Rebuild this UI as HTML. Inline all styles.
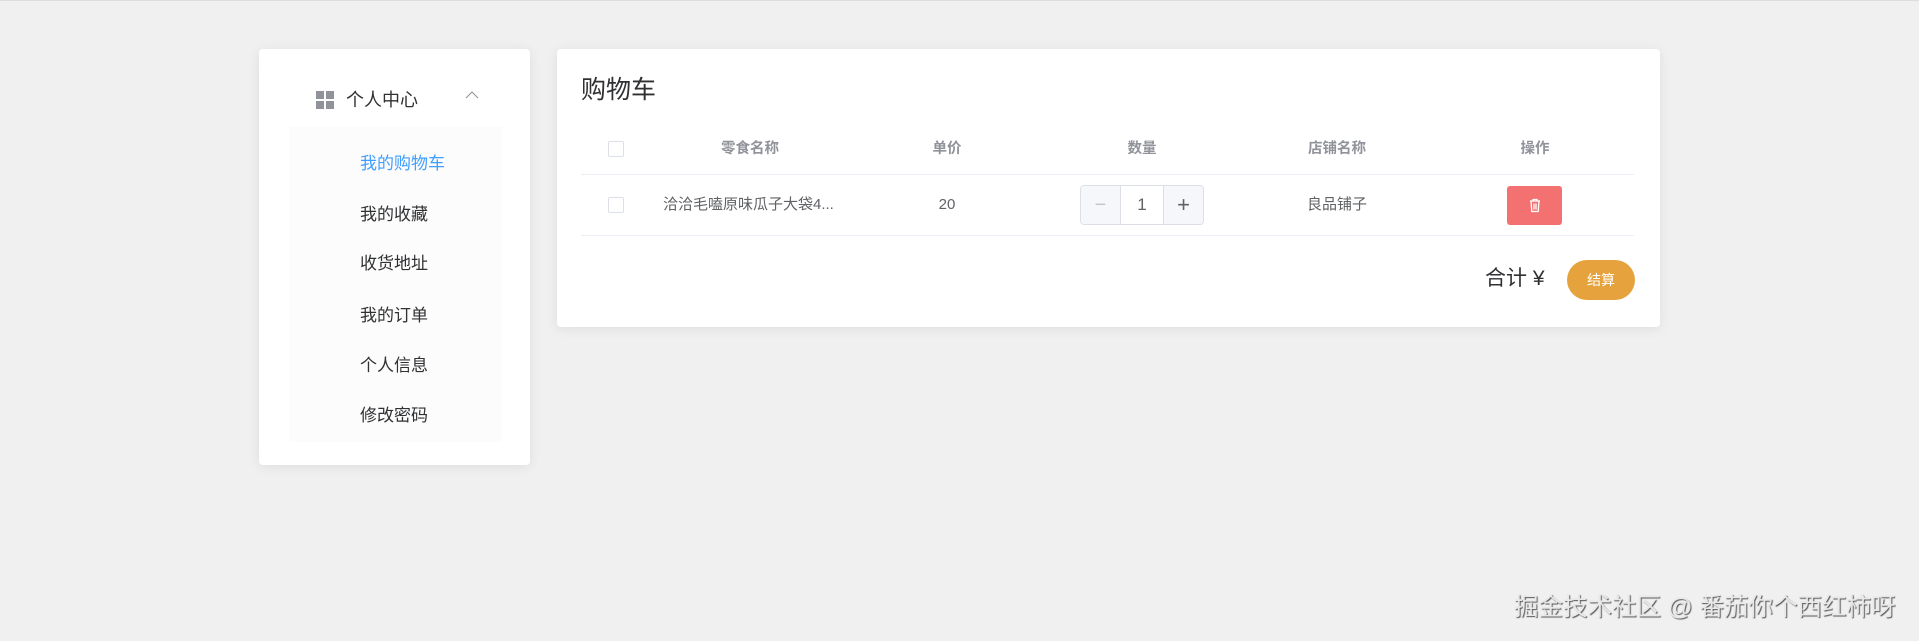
<!DOCTYPE html>
<html><head><meta charset="utf-8"><style>
*{margin:0;padding:0;box-sizing:border-box}
body{width:1919px;height:641px;background:#f0f0f0;font-family:"Liberation Sans","Noto Sans CJK SC",sans-serif;position:relative;overflow:hidden;border-top:1px solid #ddd}
.card{position:absolute;background:#fff;border-radius:4px;box-shadow:0 2px 12px rgba(0,0,0,.08)}
.abs{position:absolute}
.menu{position:absolute;left:289px;top:126px;width:213px;height:315px;background:#fcfcfc}
.mi{position:absolute;left:360px;font-size:17px;color:#303133;line-height:20px}
.cb{position:absolute;width:16px;height:16px;border:1px solid #dcdfe6;border-radius:2px;background:#fff}
.th{position:absolute;top:139px;font-size:14.5px;font-weight:bold;color:#909399;transform:translateX(-50%);line-height:18px}
.line{position:absolute;left:581px;width:1053px;height:1px;background:#ebeef5}
</style></head><body>
<div class="card" style="left:259px;top:48px;width:271px;height:416px"></div>
<div class="card" style="left:557px;top:48px;width:1103px;height:278px"></div>
<svg class="abs" style="left:316px;top:90px" width="18" height="18"><rect x="0" y="0" width="8" height="8" fill="#909399"/><rect x="10" y="0" width="8" height="8" fill="#909399"/><rect x="0" y="10" width="8" height="8" fill="#909399"/><rect x="10" y="10" width="8" height="8" fill="#909399"/></svg>
<div class="abs" style="left:346px;top:88px;font-size:18px;color:#303133;line-height:22px">个人中心</div>
<svg class="abs" style="left:465px;top:90px" width="14" height="9"><path d="M1 7L7 1L13 7" stroke="#909399" fill="none" stroke-width="1"/></svg>
<div class="menu"></div>
<div class="mi" style="top:153px;color:#409eff">我的购物车</div>
<div class="mi" style="top:204px">我的收藏</div>
<div class="mi" style="top:253px">收货地址</div>
<div class="mi" style="top:305px">我的订单</div>
<div class="mi" style="top:355px">个人信息</div>
<div class="mi" style="top:405px">修改密码</div>

<div class="abs" style="left:581px;top:74px;font-size:25px;color:#303133;line-height:30px">购物车</div>
<div class="cb" style="left:608px;top:140px"></div>
<div class="th" style="left:750px">零食名称</div>
<div class="th" style="left:947px">单价</div>
<div class="th" style="left:1142px">数量</div>
<div class="th" style="left:1337px">店铺名称</div>
<div class="th" style="left:1535px">操作</div>
<div class="line" style="top:173px"></div>
<div class="cb" style="left:608px;top:196px"></div>
<div class="abs" style="left:663px;top:195px;font-size:15px;color:#606266;line-height:18px">洽洽毛嗑原味瓜子大袋4...</div>
<div class="abs" style="left:947px;top:195px;font-size:15px;color:#606266;transform:translateX(-50%);line-height:18px">20</div>
<div class="abs" style="left:1080px;top:184px;width:124px;height:40px;border:1px solid #dcdfe6;border-radius:4px;background:#fff;overflow:hidden">
<div class="abs" style="left:0;top:0;width:40px;height:38px;background:#f5f7fa;border-right:1px solid #dcdfe6;color:#c0c4cc;text-align:center;line-height:38px;font-size:20px">−</div>
<div class="abs" style="left:40px;top:0;width:42px;height:38px;text-align:center;line-height:38px;font-size:17px;color:#606266">1</div>
<div class="abs" style="left:82px;top:0;width:40px;height:38px;background:#f5f7fa;border-left:1px solid #dcdfe6;color:#606266;text-align:center;line-height:38px;font-size:22px">+</div>
</div>
<div class="abs" style="left:1337px;top:195px;font-size:15px;color:#606266;transform:translateX(-50%);line-height:18px">良品铺子</div>
<div class="abs" style="left:1507px;top:185px;width:55px;height:39px;background:#f47171;border-radius:3px"></div>
<svg class="abs" style="left:1528px;top:197px" width="14" height="15"><path d="M2 3h10M5 3V1.5h4V3M3 3l.8 10.5h6.4L11 3M6 5.5v6M8 5.5v6" stroke="#fff" fill="none" stroke-width="1.3"/></svg>
<div class="line" style="top:234px"></div>
<div class="abs" style="left:1485px;top:265px;font-size:21px;color:#303133;line-height:26px">合计 ¥</div>
<div class="abs" style="left:1567px;top:259px;width:68px;height:40px;background:#e6a23c;border-radius:20px;color:#fff;font-size:14px;text-align:center;line-height:40px">结算</div>
<div class="abs" style="left:1514px;top:592px;font-size:24.5px;color:#e8e8e8;line-height:30px;text-shadow:1px 1px 1px #555">掘金技术社区 @ 番茄你个西红柿呀</div>
</body></html>
